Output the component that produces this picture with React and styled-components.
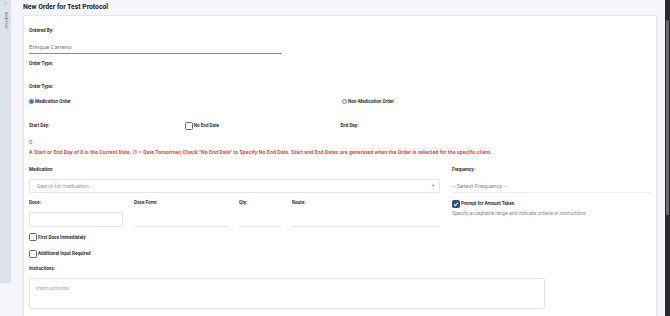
import React from "react";
import styled, { createGlobalStyle } from "styled-components";

const GlobalStyle = createGlobalStyle`
  html, body {
    margin: 0;
    padding: 0;
    width: 670px;
    height: 316px;
    overflow: hidden;
    background: #f5f6fb;
    font-family: Roboto, "Liberation Sans", sans-serif;
  }
`;

const Page = styled.div`
  display: flex;
  width: 670px;
  height: 316px;
  overflow: hidden;
`;

const Sidebar = styled.div`
  width: 11px;
  height: 283px;
  background: #dde1ea;
  display: flex;
  flex-direction: column;
  align-items: center;
  flex-shrink: 0;
`;

const Chevron = styled.span`
  font-size: 5px;
  line-height: 5px;
  color: #7d828e;
`;

const SideText = styled.span`
  writing-mode: vertical-rl;
  font-size: 3px;
  letter-spacing: 0.2px;
  color: #6b7080;
  margin-top: 7px;
`;

const Main = styled.div`
  flex: 1;
  padding: 0 8px 0 12px;
  display: flex;
  flex-direction: column;
`;

const Title = styled.h1`
  margin: 0;
  height: 15px;
  line-height: 14px;
  font-size: 6.8px;
  font-weight: 700;
  color: #222;
`;

const Card = styled.div`
  flex: 1;
  background: #fff;
  border: 1px solid #e4e6ee;
  border-bottom: none;
  padding: 0 4px 0 5px;
  display: flex;
  flex-direction: column;
`;

const Label = styled.div`
  font-size: 4.6px;
  font-weight: 700;
  line-height: 6px;
  height: 6px;
  color: #333;
  white-space: nowrap;
  margin-top: ${(p) => p.$mt || 0}px;
`;

const NameInput = styled.div`
  width: 253px;
  height: 12px;
  line-height: 12px;
  border-bottom: 1px solid #6a8cc8;
  font-size: 6px;
  color: #777;
  margin-top: 7px;
`;

const Quarters = styled.div`
  display: grid;
  grid-template-columns: repeat(4, 1fr);
  align-items: center;
  margin-top: ${(p) => p.$mt || 0}px;
  height: ${(p) => p.$h}px;
`;

const Halves = styled.div`
  display: flex;
  align-items: center;
  grid-column: ${(p) => p.$col};
  padding-left: ${(p) => p.$pl || 0}px;
`;

const Radio = styled.span`
  width: 5px;
  height: 5px;
  border-radius: 50%;
  box-sizing: border-box;
  border: 1px solid ${(p) => (p.$on ? "#1a73e8" : "#888")};
  background: ${(p) => (p.$on ? "radial-gradient(circle, #1a73e8 55%, #cfe0fb 60%)" : "#fff")};
  margin-right: 1px;
`;

const Check = styled.span`
  width: 8px;
  height: 8px;
  box-sizing: border-box;
  border-radius: 1.5px;
  border: 1px solid ${(p) => (p.$on ? "#2c4f8c" : "#666")};
  background: ${(p) => (p.$on ? "#2c4f8c" : "#fff")};
  display: flex;
  align-items: center;
  justify-content: center;
  margin-right: 1px;
  flex-shrink: 0;
`;

const OptionText = styled.span`
  font-size: 4.6px;
  font-weight: 700;
  color: #333;
  white-space: nowrap;
`;

const Row = styled.div`
  display: flex;
  align-items: center;
  height: 8px;
  margin-top: ${(p) => p.$mt || 0}px;
`;

const DayValue = styled.div`
  grid-column: 1;
  height: 13px;
  font-size: 6px;
  line-height: 12px;
  color: #666;
`;

const EndLine = styled.div`
  grid-column: 3;
  height: 12px;
  border-bottom: 1px solid #eef0f3;
`;

const Warning = styled.div`
  font-size: 5.35px;
  font-weight: 700;
  line-height: 6px;
  color: #e5484d;
  white-space: nowrap;
`;

const MedGrid = styled.div`
  display: grid;
  grid-template-columns: 1fr 200px;
  column-gap: 12px;
  row-gap: 7px;
  margin-top: 12px;
`;

const Field = styled.div`
  display: flex;
  flex-direction: column;
`;

const SearchBox = styled.div`
  margin-top: 6px;
  height: 14px;
  box-sizing: border-box;
  border: 1px solid #e6e6e6;
  border-radius: 2px;
  display: flex;
  align-items: center;
  justify-content: space-between;
  padding: 0 4px 0 7px;
  font-size: 5.3px;
  color: #9a9a9a;
`;

const Caret = styled.span`
  font-size: 4px;
  color: #888;
`;

const UnderSelect = styled.div`
  margin-top: 6px;
  height: 14px;
  box-sizing: border-box;
  border-bottom: 1px solid #eceef1;
  line-height: 13px;
  font-size: 6px;
  color: #888;
`;

const DoseRow = styled.div`
  display: grid;
  grid-template-columns: 94px 94px 42px 1fr;
  column-gap: 11px;
`;

const Box = styled.div`
  margin-top: 6px;
  height: 15px;
  box-sizing: border-box;
  border: 1px solid #e3e3e3;
  border-radius: 2px;
`;

const Line = styled.div`
  margin-top: 6px;
  height: 14px;
  border-bottom: 1px solid #e8eaee;
`;

const Prompt = styled.div`
  display: flex;
  flex-direction: column;
`;

const Helper = styled.div`
  margin-top: 2px;
  font-size: 5px;
  line-height: 6px;
  color: #888;
  white-space: nowrap;
`;

const TextArea = styled.div`
  margin-top: 5.5px;
  width: 516px;
  height: 31px;
  box-sizing: border-box;
  border: 1px solid #e3e3e3;
  border-radius: 2px;
  padding: 5px 6px;
  font-size: 6.2px;
  color: #aaa;
`;

const Scrollbar = styled.div`
  width: 5px;
  background: #2b2b2b;
  flex-shrink: 0;
  display: flex;
  justify-content: center;
`;

const Thumb = styled.div`
  width: 3px;
  height: 195px;
  margin-top: 20px;
  border-radius: 1.5px;
  background: #6b6b6b;
`;

const Tick = () => (
  <svg width="6" height="6" viewBox="0 0 12 12">
    <path d="M2 6.5l2.8 2.8L10 3.5" fill="none" stroke="#fff" strokeWidth="2.2" />
  </svg>
);

export default function App() {
  return (
    <Page>
      <GlobalStyle />
      <Sidebar>
        <Chevron>‹</Chevron>
        <SideText>HOMEPAGE</SideText>
      </Sidebar>
      <Main>
        <Title>New Order for Test Protocol</Title>
        <Card>
          <Label $mt={12}>Ordered By:</Label>
          <NameInput>Enrique Carreno</NameInput>
          <Label $mt={6.5}>Order Type:</Label>
          <Label $mt={17}>Order Type:</Label>

          <Quarters $mt={8.3} $h={8}>
            <Halves $col="1 / 3">
              <Radio $on />
              <OptionText>Medication Order</OptionText>
            </Halves>
            <Halves $col="3 / 5" $pl={1.5}>
              <Radio />
              <OptionText>Non-Medication Order</OptionText>
            </Halves>
          </Quarters>

          <Quarters $mt={16} $h={8}>
            <Label>Start Day:</Label>
            <Halves $col="2">
              <Check />
              <OptionText>No End Date</OptionText>
            </Halves>
            <Label>End Day:</Label>
          </Quarters>

          <Quarters $mt={6} $h={13}>
            <DayValue>0</DayValue>
            <EndLine />
          </Quarters>

          <Warning>
            A Start or End Day of 0 is the Current Date. (1 = Date Tomorrow) Check "No End Date" to Specify No End Date. Start and End Dates are generated when the Order is selected for the specific client.
          </Warning>

          <MedGrid>
            <Field>
              <Label>Medication:</Label>
              <SearchBox>
                <span>Search for medication...</span>
                <Caret>▼</Caret>
              </SearchBox>
            </Field>
            <Field>
              <Label>Frequency:</Label>
              <UnderSelect>-- Select Frequency --</UnderSelect>
            </Field>

            <DoseRow>
              <Field>
                <Label>Dose:</Label>
                <Box />
              </Field>
              <Field>
                <Label>Dose Form:</Label>
                <Line />
              </Field>
              <Field>
                <Label>Qty:</Label>
                <Line />
              </Field>
              <Field>
                <Label>Route:</Label>
                <Line />
              </Field>
            </DoseRow>
            <Prompt>
              <Row>
                <Check $on>
                  <Tick />
                </Check>
                <OptionText>Prompt for Amount Taken</OptionText>
              </Row>
              <Helper>Specify acceptable range and indicate criteria in instructions</Helper>
            </Prompt>
          </MedGrid>

          <Row $mt={6.5}>
            <Check />
            <OptionText>First Dose Immediately</OptionText>
          </Row>
          <Row $mt={8.5}>
            <Check />
            <OptionText>Additional Input Required</OptionText>
          </Row>

          <Label $mt={8.5}>Instructions:</Label>
          <TextArea>Instructions</TextArea>
        </Card>
      </Main>
      <Scrollbar>
        <Thumb />
      </Scrollbar>
    </Page>
  );
}
